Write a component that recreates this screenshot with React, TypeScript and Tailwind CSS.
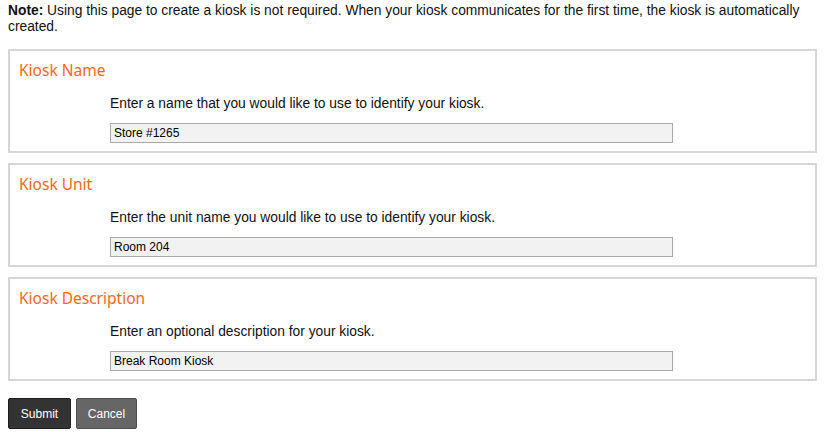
import React from "react";

const sections = [
  {
    title: "Kiosk Name",
    hint: "Enter a name that you would like to use to identify your kiosk.",
    value: "Store #1265",
  },
  {
    title: "Kiosk Unit",
    hint: "Enter the unit name you would like to use to identify your kiosk.",
    value: "Room 204",
  },
  {
    title: "Kiosk Description",
    hint: "Enter an optional description for your kiosk.",
    value: "Break Room Kiosk",
  },
];

export default function App() {
  return (
    <div className="min-h-screen bg-white px-2 pt-[3px] font-['Liberation_Sans',sans-serif] text-[#111]">
      <p className="text-[13.8px] leading-[16px]">
        <strong>Note:</strong> Using this page to create a kiosk is not required. When your kiosk
        communicates for the first time, the kiosk is automatically created.
      </p>

      <div className="mt-[14px] flex flex-col gap-[10px]">
        {sections.map((s) => (
          <section
            key={s.title}
            className="h-[104px] border-2 border-[#d6d6d6] px-[9px] pt-[9px]"
          >
            <h2 className="font-['Noto_Sans',sans-serif] text-[15.5px] leading-[20px] text-[#f5691d]">
              {s.title}
            </h2>
            <div className="ml-[91px] mt-[16px]">
              <div className="text-[13.8px] leading-[16px]">{s.hint}</div>
              <input
                type="text"
                defaultValue={s.value}
                className="mt-[11px] h-[20px] w-[563px] border border-[#a9a9a9] bg-[#f2f2f2] px-[3px] font-['Liberation_Sans',sans-serif] text-[12px] text-black outline-none"
              />
            </div>
          </section>
        ))}
      </div>

      <div className="mt-[17px] flex gap-[5px] text-[12px]">
        <button
          type="button"
          className="h-[31px] w-[63px] rounded-[2px] border border-[#1e1e1e] bg-[#333333] text-white"
        >
          Submit
        </button>
        <button
          type="button"
          className="h-[31px] w-[61px] rounded-[2px] border border-[#4e4e4e] bg-[#666666] text-white"
        >
          Cancel
        </button>
      </div>
    </div>
  );
}
